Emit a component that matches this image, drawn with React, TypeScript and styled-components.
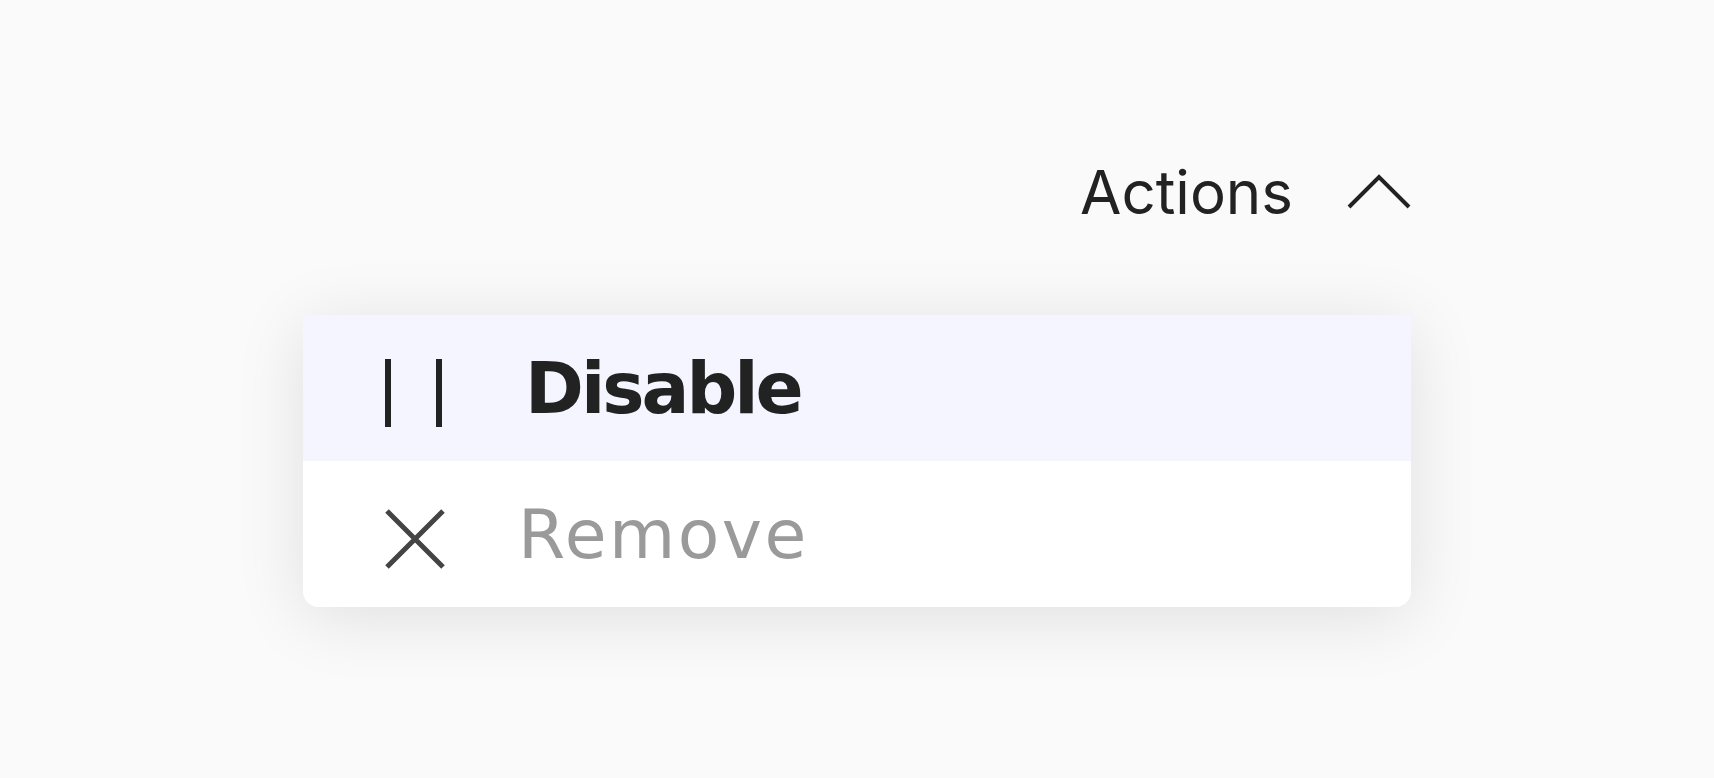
import React from "react";
import styled, { createGlobalStyle } from "styled-components";

const GlobalStyle = createGlobalStyle`
  html, body {
    margin: 0;
    padding: 0;
    background: #fafafa;
  }
  body {
    font-family: "Inter", "Noto Sans", sans-serif;
  }
`;

const Page = styled.div`
  width: 100%;
  height: 778px;
  padding-top: 150px;
  box-sizing: border-box;
`;

const Dropdown = styled.div`
  width: 1108px;
  margin-left: 303px;
  display: flex;
  flex-direction: column;
`;

const Trigger = styled.button`
  align-self: flex-end;
  display: flex;
  align-items: center;
  gap: 54px;
  height: 84px;
  padding: 0;
  border: none;
  background: transparent;
  font-family: "Inter", "Noto Sans", sans-serif;
  font-size: 60px;
  font-weight: 400;
  color: #222222;
  cursor: pointer;
`;

const Menu = styled.ul`
  list-style: none;
  margin: 81px 0 0;
  padding: 0;
  background: #ffffff;
  border-radius: 0 0 16px 16px;
  box-shadow: 0 10px 70px rgba(0, 0, 0, 0.11);
  overflow: hidden;
`;

const Item = styled.li<{ $active?: boolean }>`
  display: flex;
  align-items: center;
  gap: 73px;
  height: 146px;
  padding-left: 82px;
  background: ${(p) => (p.$active ? "#f4f5fe" : "#ffffff")};
  cursor: pointer;
`;

const IconBox = styled.span`
  display: flex;
  align-items: center;
  width: 60px;
  margin-top: 9px;
`;

const Label = styled.span<{ $active?: boolean }>`
  font-family: "DejaVu Sans", "Noto Sans", sans-serif;
  font-size: ${(p) => (p.$active ? "71px" : "68px")};
  font-weight: ${(p) => (p.$active ? 700 : 400)};
  color: ${(p) => (p.$active ? "#222222" : "#9a9a9a")};
  letter-spacing: ${(p) => (p.$active ? "-3px" : "2.5px")};
  padding-left: ${(p) => (p.$active ? "7px" : "0")};
`;

const PauseIcon = () => (
  <svg width="58" height="68" viewBox="0 0 58 68">
    <rect x="0" y="0" width="6" height="68" fill="#222" />
    <rect x="51" y="0" width="6" height="68" fill="#222" />
  </svg>
);

const CloseIcon = () => (
  <svg width="60" height="60" viewBox="0 0 60 60">
    <path d="M2 2 L58 58 M58 2 L2 58" stroke="#444" strokeWidth="5" />
  </svg>
);

const ChevronUp = () => (
  <svg width="64" height="36" viewBox="0 0 64 36">
    <polyline points="2,33 32,3 62,33" fill="none" stroke="#222" strokeWidth="4" />
  </svg>
);

export default function App() {
  return (
    <>
      <GlobalStyle />
      <Page>
        <Dropdown>
          <Trigger>
            Actions
            <ChevronUp />
          </Trigger>
          <Menu>
            <Item $active>
              <IconBox>
                <PauseIcon />
              </IconBox>
              <Label $active>Disable</Label>
            </Item>
            <Item>
              <IconBox>
                <CloseIcon />
              </IconBox>
              <Label>Remove</Label>
            </Item>
          </Menu>
        </Dropdown>
      </Page>
    </>
  );
}
